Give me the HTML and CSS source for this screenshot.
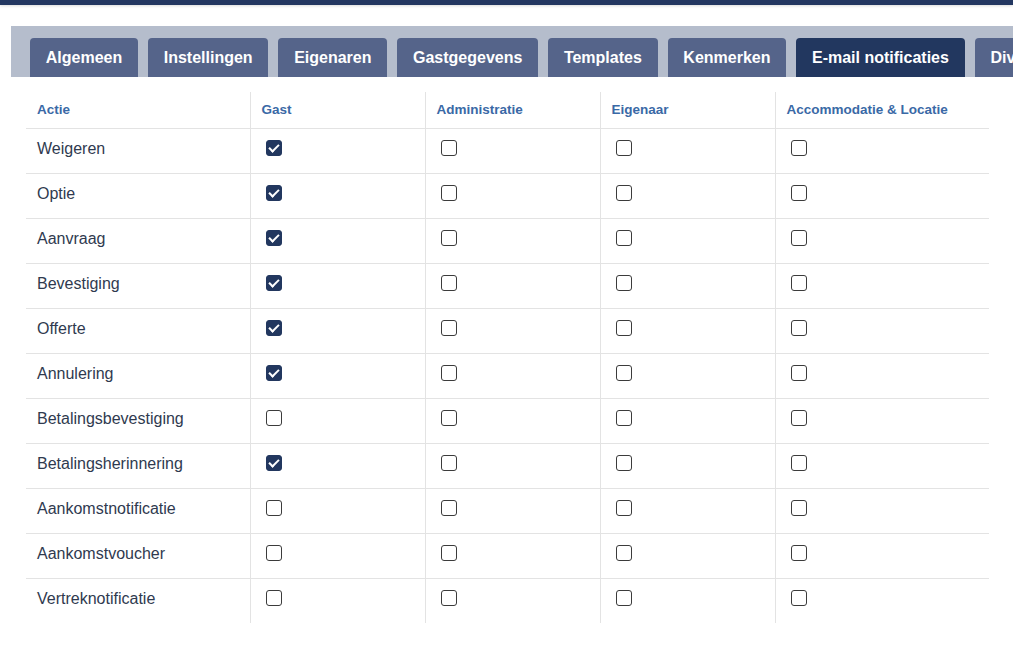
FILE: index.html
```html
<!DOCTYPE html>
<html lang="nl">
<head>
<meta charset="utf-8">
<title>E-mail notificaties</title>
<link rel="stylesheet" href="styles.css">
</head>
<body>
<div class="topbar"></div>
<nav class="tabs">
  <a class="tab">Algemeen</a>
  <a class="tab">Instellingen</a>
  <a class="tab">Eigenaren</a>
  <a class="tab">Gastgegevens</a>
  <a class="tab">Templates</a>
  <a class="tab">Kenmerken</a>
  <a class="tab active">E-mail notificaties</a>
  <a class="tab">Diversen</a>
</nav>
<table class="grid">
  <thead>
    <tr><th>Actie</th><th>Gast</th><th>Administratie</th><th>Eigenaar</th><th>Accommodatie &amp; Locatie</th></tr>
  </thead>
  <tbody>
    <tr><td>Weigeren</td><td><input type="checkbox" checked></td><td><input type="checkbox"></td><td><input type="checkbox"></td><td><input type="checkbox"></td></tr>
    <tr><td>Optie</td><td><input type="checkbox" checked></td><td><input type="checkbox"></td><td><input type="checkbox"></td><td><input type="checkbox"></td></tr>
    <tr><td>Aanvraag</td><td><input type="checkbox" checked></td><td><input type="checkbox"></td><td><input type="checkbox"></td><td><input type="checkbox"></td></tr>
    <tr><td>Bevestiging</td><td><input type="checkbox" checked></td><td><input type="checkbox"></td><td><input type="checkbox"></td><td><input type="checkbox"></td></tr>
    <tr><td>Offerte</td><td><input type="checkbox" checked></td><td><input type="checkbox"></td><td><input type="checkbox"></td><td><input type="checkbox"></td></tr>
    <tr><td>Annulering</td><td><input type="checkbox" checked></td><td><input type="checkbox"></td><td><input type="checkbox"></td><td><input type="checkbox"></td></tr>
    <tr><td>Betalingsbevestiging</td><td><input type="checkbox"></td><td><input type="checkbox"></td><td><input type="checkbox"></td><td><input type="checkbox"></td></tr>
    <tr><td>Betalingsherinnering</td><td><input type="checkbox" checked></td><td><input type="checkbox"></td><td><input type="checkbox"></td><td><input type="checkbox"></td></tr>
    <tr><td>Aankomstnotificatie</td><td><input type="checkbox"></td><td><input type="checkbox"></td><td><input type="checkbox"></td><td><input type="checkbox"></td></tr>
    <tr><td>Aankomstvoucher</td><td><input type="checkbox"></td><td><input type="checkbox"></td><td><input type="checkbox"></td><td><input type="checkbox"></td></tr>
    <tr><td>Vertreknotificatie</td><td><input type="checkbox"></td><td><input type="checkbox"></td><td><input type="checkbox"></td><td><input type="checkbox"></td></tr>
  </tbody>
</table>
</body>
</html>
```
FILE: styles.css
```css
html, body {
  margin: 0;
  padding: 0;
  background: #ffffff;
  font-family: "Liberation Sans", Arial, sans-serif;
  overflow: hidden;
}

.topbar {
  height: 5px;
  background: #233761;
  box-shadow: 0 1px 3px rgba(0, 0, 0, 0.15);
}

.tabs {
  display: flex;
  gap: 10px;
  margin: 21px 0 0 11px;
  padding: 12px 0 0 19px;
  background: #b5bdcc;
  overflow: hidden;
  white-space: nowrap;
}

.tab {
  flex: none;
  height: 39px;
  line-height: 40px;
  padding: 0 15.75px;
  background: #55648a;
  color: #ffffff;
  font-weight: bold;
  font-size: 16px;
  border-radius: 4px 4px 0 0;
}

.tab.active {
  background: #22375f;
}

.grid {
  margin: 15px 0 0 26px;
  width: 963px;
  border-collapse: collapse;
  table-layout: fixed;
}

.grid th,
.grid td {
  text-align: left;
  padding: 0 11px;
  border-left: 1px solid #e3e3e3;
}

.grid th:first-child,
.grid td:first-child {
  border-left: none;
}

.grid th:nth-child(1) { width: 224px; }
.grid th:nth-child(2),
.grid th:nth-child(3),
.grid th:nth-child(4) { width: 175px; }

.grid th {
  height: 36px;
  padding-bottom: 1px;
  box-sizing: border-box;
  font-size: 13.5px;
  font-weight: bold;
  color: #3a69a6;
  border-bottom: 1px solid #e3e3e3;
}

.grid td {
  height: 45px;
  padding-bottom: 4px;
  box-sizing: border-box;
  font-size: 16px;
  color: #2f3a4f;
  border-bottom: 1px solid #e3e3e3;
}

.grid tbody tr:last-child td {
  border-bottom: none;
}

.grid input[type="checkbox"] {
  appearance: none;
  -webkit-appearance: none;
  position: relative;
  box-sizing: border-box;
  width: 16px;
  height: 16px;
  margin: 0 0 2px 4px;
  vertical-align: middle;
  border: 1.5px solid #3b3b3b;
  border-radius: 3px;
  background: #ffffff;
}

.grid input[type="checkbox"]:checked {
  background: #22375f;
  border-color: #22375f;
}

.grid input[type="checkbox"]:checked::after {
  content: "";
  position: absolute;
  left: 4.5px;
  top: 1.5px;
  width: 4px;
  height: 8px;
  border: solid #ffffff;
  border-width: 0 2.5px 2.5px 0;
  transform: rotate(45deg);
}
```
